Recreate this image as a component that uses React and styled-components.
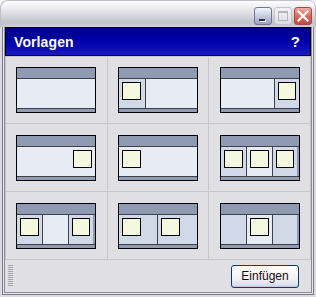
import React from "react";
import styled, { createGlobalStyle, css } from "styled-components";

const GlobalStyle = createGlobalStyle`
  html, body {
    margin: 0;
    padding: 0;
    background: #ffffff;
  }
  body {
    font-family: "Liberation Sans", Arial, sans-serif;
  }
`;

const templates = [
  [{ tone: "light", flex: true }],
  [{ tone: "dark", width: 26, box: "start" }, { tone: "light", flex: true }],
  [{ tone: "light", flex: true }, { tone: "dark", width: 25, box: "start" }],
  [{ tone: "light", flex: true, box: "end" }],
  [{ tone: "light", flex: true, box: "start" }],
  [
    { tone: "dark", width: 25, box: "start" },
    { tone: "light", width: 26, box: "start" },
    { tone: "dark", width: 25, box: "start" },
  ],
  [
    { tone: "dark", width: 25, box: "start" },
    { tone: "light", width: 26 },
    { tone: "dark", width: 25, box: "start" },
  ],
  [
    { tone: "dark", flex: true, box: "start" },
    { tone: "dark", flex: true, box: "start" },
  ],
  [
    { tone: "dark", width: 25 },
    { tone: "light", width: 26, box: "start" },
    { tone: "dark", width: 25 },
  ],
];

const App = () => {
  return (
    <>
      <GlobalStyle />
      <Window>
        <TitleBar>
          <CaptionButton $kind="min">
            <MinDash />
          </CaptionButton>
          <CaptionButton $kind="max">
            <MaxSquare />
          </CaptionButton>
          <CaptionButton $kind="close">
            <svg width="12" height="12" viewBox="0 0 12 12">
              <path
                d="M1.5 1.5 L10.5 10.5 M10.5 1.5 L1.5 10.5"
                stroke="#ffffff"
                strokeWidth="2.2"
                strokeLinecap="square"
              />
            </svg>
          </CaptionButton>
        </TitleBar>
        <Frame>
          <Border>
            <Client>
              <Header>
                <span>Vorlagen</span>
                <span>?</span>
              </Header>
              <Grid>
                {templates.map((cols, i) => (
                  <Cell key={i}>
                    <Thumb>
                      <ThumbHead />
                      <ThumbBody>
                        {cols.map((col, j) => (
                          <Column
                            key={j}
                            $tone={col.tone}
                            $width={col.width}
                            $flex={col.flex}
                            $align={col.box}
                          >
                            {col.box && <Box />}
                          </Column>
                        ))}
                      </ThumbBody>
                      <ThumbFoot />
                    </Thumb>
                  </Cell>
                ))}
              </Grid>
              <Footer>
                <Gripper />
                <Button>Einfügen</Button>
              </Footer>
            </Client>
          </Border>
        </Frame>
      </Window>
    </>
  );
};

export default App;

const Window = styled.div`
  width: 316px;
  height: 297px;
  box-sizing: border-box;
  display: flex;
  flex-direction: column;
  background: #dadae2;
  border-radius: 7px 7px 0 0;
  overflow: hidden;
`;

const TitleBar = styled.div`
  height: 27px;
  flex: none;
  box-sizing: border-box;
  display: flex;
  justify-content: flex-end;
  align-items: flex-start;
  gap: 2px;
  padding: 7px 4px 0 0;
  background: linear-gradient(
    #ffffff 0%,
    #f0f0f4 25%,
    #d4d4dc 60%,
    #c2c2cc 85%,
    #d0d0d8 100%
  );
  border-radius: 7px 7px 0 0;
  box-shadow: inset 1px 1px 0 #c0c0cc, inset -1px 0 0 #b8b8c4;
`;

const CaptionButton = styled.div`
  width: 18px;
  height: 18px;
  box-sizing: border-box;
  border-radius: 3px;
  position: relative;
  display: flex;
  align-items: center;
  justify-content: center;
  ${(p) =>
    p.$kind === "min" &&
    css`
      border: 1px solid #6f7596;
      background: linear-gradient(#f4f5fa, #c4c8dc 55%, #9aa0bc);
    `}
  ${(p) =>
    p.$kind === "max" &&
    css`
      border: 1px solid #c4c4cc;
      background: linear-gradient(#f4f4f6, #dcdce2);
    `}
  ${(p) =>
    p.$kind === "close" &&
    css`
      border: 1px solid #a44848;
      background: linear-gradient(#f2aaa0, #dc6a5c 50%, #c44a3e);
    `}
`;

const MinDash = styled.div`
  position: absolute;
  left: 4px;
  bottom: 3px;
  width: 6px;
  height: 2px;
  background: #2c3048;
  box-shadow: 1px 1px 0 #ffffff;
`;

const MaxSquare = styled.div`
  width: 10px;
  height: 10px;
  box-sizing: border-box;
  border: 1px solid #b4b4bc;
  border-top-width: 2px;
`;

const Frame = styled.div`
  flex: 1;
  display: flex;
  padding: 0 2px 2px;
`;

const Border = styled.div`
  flex: 1;
  display: flex;
  border: 1px solid #7a7a8a;
  border-top: none;
  padding: 0 1px 1px;
  background: #e6e6ec;
`;

const Client = styled.div`
  flex: 1;
  display: flex;
  flex-direction: column;
  border: 1px solid #8a8a9a;
  border-top: none;
  background: #e0dfe3;

  & > * {
    flex: none;
  }
`;

const Header = styled.div`
  height: 29px;
  box-sizing: border-box;
  border: 1px solid #000000;
  background: linear-gradient(#00008a, #0000a8 50%, #1a1ac4);
  color: #ffffff;
  font-weight: bold;
  font-size: 14px;
  display: flex;
  align-items: center;
  justify-content: space-between;
  padding: 0 10px 0 8px;
  letter-spacing: 0.1px;

  span:last-child {
    font-size: 15px;
  }
`;

const Grid = styled.div`
  display: grid;
  grid-template-columns: repeat(3, 1fr);
  grid-template-rows: 66px 67px 67px;
  gap: 1px;
  padding: 1px;
  background: #c6c6ca;
`;

const Cell = styled.div`
  background: #e0dfe3;
  display: flex;
  align-items: center;
  justify-content: center;
`;

const Thumb = styled.div`
  width: 80px;
  height: 46px;
  box-sizing: border-box;
  border: 1px solid #000000;
  display: flex;
  flex-direction: column;
  background: #8f9ab3;
`;

const ThumbHead = styled.div`
  height: 10px;
  border-bottom: 1px solid #404048;
`;

const ThumbBody = styled.div`
  height: 29px;
  display: flex;
`;

const ThumbFoot = styled.div`
  height: 3px;
  border-top: 1px solid #404048;
`;

const Column = styled.div`
  box-sizing: border-box;
  display: flex;
  align-items: flex-start;
  padding: 3px;
  justify-content: ${(p) => (p.$align === "end" ? "flex-end" : "flex-start")};
  background: ${(p) => (p.$tone === "dark" ? "#d1d9e8" : "#e7ebf4")};
  ${(p) => (p.$flex ? "flex: 1;" : `width: ${p.$width}px; flex: none;`)}

  & + & {
    border-left: 1px solid #404048;
  }
`;

const Box = styled.div`
  width: 19px;
  height: 18px;
  box-sizing: border-box;
  border: 1px solid #000000;
  background: #f4f8e0;
`;

const Footer = styled.div`
  height: 32px;
  display: flex;
  align-items: center;
  justify-content: space-between;
  padding: 0 12px 0 3px;
`;

const Gripper = styled.div`
  width: 5px;
  height: 22px;
  background: repeating-linear-gradient(
    #a4a4ac 0px,
    #a4a4ac 1px,
    transparent 1px,
    transparent 2px
  );
`;

const Button = styled.button`
  width: 68px;
  height: 23px;
  box-sizing: border-box;
  border: 1px solid #003c74;
  border-radius: 3px;
  background: linear-gradient(#ffffff, #f2f2f6 60%, #d8d6e6);
  box-shadow: inset 0 -1px 0 #c8c6dc;
  font-family: "Liberation Sans", Arial, sans-serif;
  font-size: 12px;
  color: #1a0a10;
  padding: 0;
  cursor: pointer;
`;
